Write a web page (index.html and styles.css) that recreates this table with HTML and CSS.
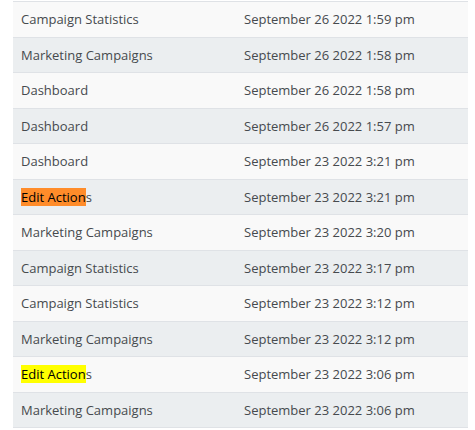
FILE: index.html
```html
<!DOCTYPE html>
<html>
<head>
<meta charset="utf-8">
<link rel="stylesheet" href="styles.css">
</head>
<body>
<table class="log">
<tbody>
<tr><td>Campaign Statistics</td><td>September 26 2022 1:59 pm</td></tr>
<tr><td>Marketing Campaigns</td><td>September 26 2022 1:58 pm</td></tr>
<tr><td>Dashboard</td><td>September 26 2022 1:58 pm</td></tr>
<tr><td>Dashboard</td><td>September 26 2022 1:57 pm</td></tr>
<tr><td>Dashboard</td><td>September 23 2022 3:21 pm</td></tr>
<tr><td><mark class="hl hl-orange">Edit Action</mark>s</td><td>September 23 2022 3:21 pm</td></tr>
<tr><td>Marketing Campaigns</td><td>September 23 2022 3:20 pm</td></tr>
<tr><td>Campaign Statistics</td><td>September 23 2022 3:17 pm</td></tr>
<tr><td>Campaign Statistics</td><td>September 23 2022 3:12 pm</td></tr>
<tr><td>Marketing Campaigns</td><td>September 23 2022 3:12 pm</td></tr>
<tr><td><mark class="hl hl-yellow">Edit Action</mark>s</td><td>September 23 2022 3:06 pm</td></tr>
<tr><td>Marketing Campaigns</td><td>September 23 2022 3:06 pm</td></tr>
</tbody>
</table>
</body>
</html>
```
FILE: styles.css
```css
html, body {
  margin: 0;
  padding: 0;
  background: #ffffff;
}
body {
  padding: 1px 0 0 13px;
  font-family: "Open Sans", "Liberation Sans", sans-serif;
  font-size: 13px;
  color: #464a4e;
}
.log {
  width: 455px;
  border-collapse: collapse;
  table-layout: fixed;
}
.log tr {
  height: 35.5px;
}
.log tr:nth-child(odd) {
  background: #f9f9f9;
}
.log tr:nth-child(even) {
  background: #ebeef0;
}
.log td {
  border-top: 1px solid #dfe2e6;
  border-bottom: 1px solid #dfe2e6;
  padding: 0 8px;
  vertical-align: middle;
  line-height: 18px;
  white-space: nowrap;
}
.log td:first-child {
  width: 207px;
}
.hl {
  color: #000;
  padding: 0;
}
.hl-orange {
  background: #ff8c2a;
}
.hl-yellow {
  background: #ffff00;
}
```
